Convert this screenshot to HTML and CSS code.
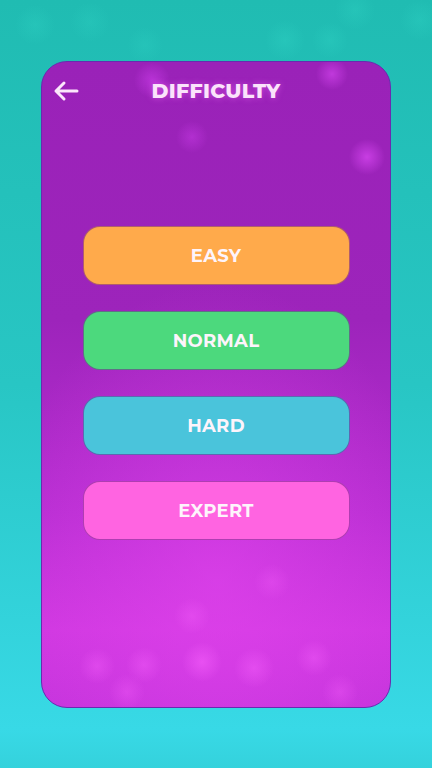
FILE: index.html
```html
<!DOCTYPE html>
<html>
<head>
<meta charset="utf-8">
<link rel="stylesheet" href="styles.css">
</head>
<body>
<div class="screen">
  <div class="card">
    <div class="header">
      <button class="back" aria-label="Back">
        <svg width="28" height="22" viewBox="0 0 28 22"><path d="M25 11H4M12 3L4 11l8 8" fill="none" stroke="#fbe6fb" stroke-width="3" stroke-linecap="round" stroke-linejoin="round"/></svg>
      </button>
      <h1 class="title">DIFFICULTY</h1>
    </div>
    <div class="options">
      <button class="opt easy">EASY</button>
      <button class="opt normal">NORMAL</button>
      <button class="opt hard">HARD</button>
      <button class="opt expert">EXPERT</button>
    </div>
  </div>
</div>
</body>
</html>
```
FILE: styles.css
```css
html, body {
  margin: 0;
  padding: 0;
}
body {
  width: 432px;
  height: 768px;
  overflow: hidden;
  font-family: "Montserrat", "Open Sans", "Liberation Sans", sans-serif;
}
.screen {
  width: 432px;
  height: 768px;
  box-sizing: border-box;
  padding: 61px 41px 0 41px;
  background:
    radial-gradient(circle at 35px 25px, rgba(60,230,210,0.18), transparent 20px),
    radial-gradient(circle at 90px 22px, rgba(60,230,210,0.15), transparent 20px),
    radial-gradient(circle at 145px 45px, rgba(60,230,210,0.15), transparent 18px),
    radial-gradient(circle at 285px 40px, rgba(60,230,210,0.2), transparent 20px),
    radial-gradient(circle at 330px 40px, rgba(60,230,210,0.18), transparent 18px),
    radial-gradient(circle at 355px 10px, rgba(60,230,210,0.18), transparent 20px),
    radial-gradient(circle at 420px 20px, rgba(60,230,210,0.18), transparent 20px),
    linear-gradient(180deg, #20bcb2 0%, #28c6c4 50%, #38d9e6 95%, #34d2dc 100%);
}
.card {
  width: 350px;
  height: 647px;
  box-sizing: border-box;
  border-radius: 26px;
  border: 1px solid #6a2ab0;
  display: flex;
  flex-direction: column;
  background:
    radial-gradient(circle at 325px 95px, rgba(230,80,255,0.6), transparent 18px),
    radial-gradient(circle at 110px 18px, rgba(220,70,250,0.45), transparent 18px),
    radial-gradient(circle at 150px 75px, rgba(220,70,250,0.35), transparent 16px),
    radial-gradient(circle at 290px 12px, rgba(230,80,255,0.5), transparent 16px),
    radial-gradient(circle at 160px 600px, rgba(250,100,255,0.5), transparent 20px),
    radial-gradient(circle at 212px 606px, rgba(250,100,255,0.4), transparent 20px),
    radial-gradient(circle at 55px 604px, rgba(250,100,255,0.35), transparent 18px),
    radial-gradient(circle at 102px 603px, rgba(250,100,255,0.35), transparent 18px),
    radial-gradient(circle at 272px 596px, rgba(250,100,255,0.35), transparent 18px),
    radial-gradient(circle at 298px 630px, rgba(250,100,255,0.3), transparent 18px),
    radial-gradient(circle at 85px 630px, rgba(250,100,255,0.3), transparent 18px),
    radial-gradient(circle at 150px 554px, rgba(250,100,255,0.3), transparent 18px),
    radial-gradient(circle at 230px 520px, rgba(250,100,255,0.25), transparent 18px),
    radial-gradient(ellipse 220px 300px at 175px 520px, rgba(230,70,240,0.55), transparent 100%),
    linear-gradient(180deg, #9a22b8 0%, #9d24bb 40%, #b82ed2 70%, #cf38e0 88%, #c534dc 100%);
  overflow: hidden;
}
.header {
  position: relative;
  height: 58px;
  display: flex;
  align-items: center;
  justify-content: center;
}
.back {
  position: absolute;
  left: 9px;
  top: 17px;
  background: none;
  border: 0;
  padding: 0;
  width: 30px;
  height: 24px;
  display: flex;
  align-items: center;
  justify-content: center;
}
.title {
  margin: 0;
  margin-top: -1px;
  font-size: 20.5px;
  font-weight: 800;
  letter-spacing: 0.3px;
  color: #fbe3fb;
  text-shadow: 0 0 6px rgba(255,120,255,0.5);
}
.options {
  margin-top: 106px;
  display: flex;
  flex-direction: column;
  align-items: center;
  gap: 26px;
}
.opt {
  width: 267px;
  height: 59px;
  border: 1px solid rgba(110,30,140,0.55);
  border-radius: 17px;
  font-family: "Montserrat", "Open Sans", "Liberation Sans", sans-serif;
  font-weight: 700;
  font-size: 18px;
  letter-spacing: 0.3px;
  color: #fdf4fb;
  padding: 0;
}
.easy { background: #ffaa4b; }
.normal { background: #4cd97d; }
.hard { background: #4ac4db; }
.expert { background: #ff64e1; }
```
